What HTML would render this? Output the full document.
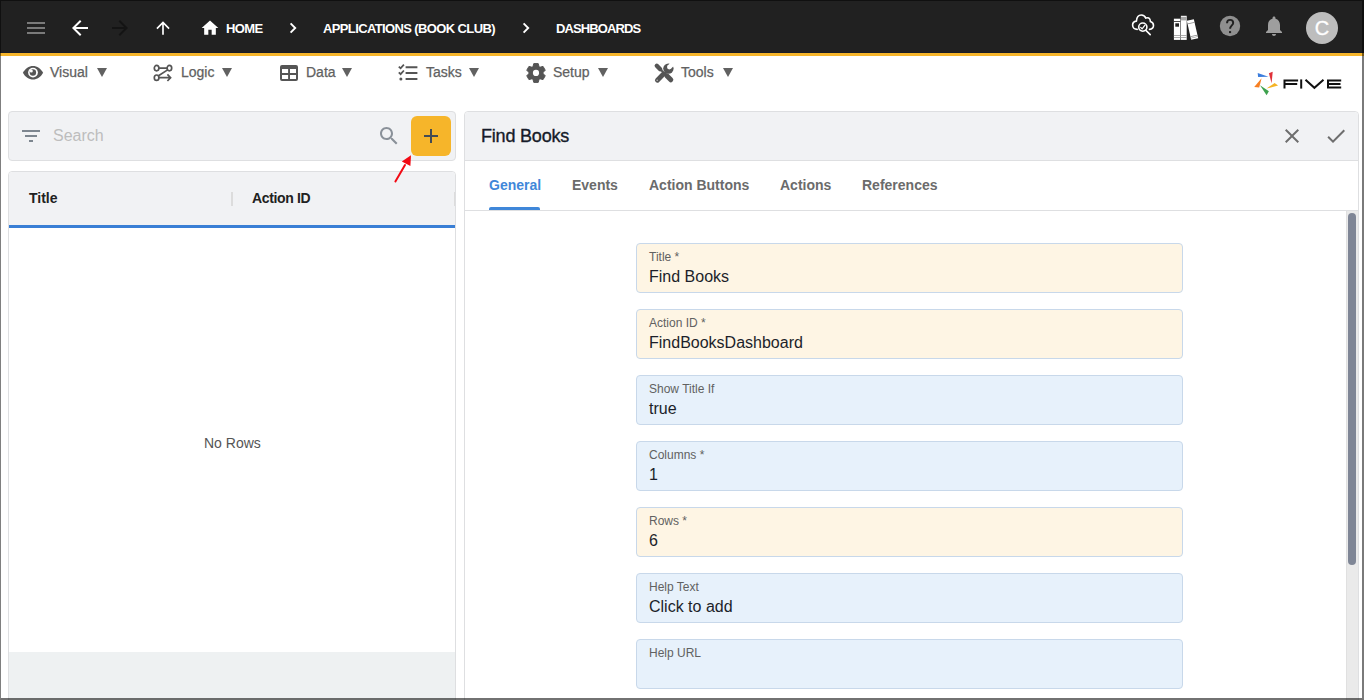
<!DOCTYPE html>
<html><head><meta charset="utf-8">
<style>
*{box-sizing:border-box;margin:0;padding:0}
html,body{width:1364px;height:700px;overflow:hidden;background:#fff;font-family:"Liberation Sans",sans-serif}
.a{position:absolute}
.t{position:absolute;white-space:nowrap;line-height:1}
#hdr{left:0;top:0;width:1364px;height:53px;background:#212121}
#hdrline{left:0;top:52px;width:1364px;height:1px;background:#1a1d27}
#yel{left:0;top:53px;width:1364px;height:3px;background:#f6b52a}
.crumb{color:#fff;font-weight:bold;font-size:13px}
.tb{color:#616161;font-size:14px;-webkit-text-stroke:0.25px #616161}

.card{background:#f1f2f4;border:1px solid #dedfe1;border-radius:4px}
.fld{position:absolute;left:636px;width:547px;height:50px;border:1px solid #c8d8ea;border-radius:4px}
.cream{background:#fef5e4}
.blue{background:#e7f1fb}
.lbl{position:absolute;left:12px;font-size:12px;color:#616161;white-space:nowrap;line-height:1}
.val{position:absolute;left:12px;font-size:16px;color:#1c1f2a;white-space:nowrap;line-height:1}
.tab{position:absolute;top:178px;font-size:14px;font-weight:bold;color:#6b6b6b;white-space:nowrap;line-height:1}
#border{left:0;top:0;width:1364px;height:700px;border-left:1px solid rgba(0,0,0,.5);border-top:1px solid rgba(0,0,0,.5);border-right:2px solid rgba(0,0,0,.52);border-bottom:2px solid rgba(0,0,0,.55);pointer-events:none}
</style></head><body>
<!-- header -->
<div id="hdr" class="a"></div>
<div id="hdrline" class="a"></div>
<div id="yel" class="a"></div>

<!-- hamburger -->
<div class="a" style="left:27px;top:22px;width:18px;height:2px;background:#7a7a7a"></div>
<div class="a" style="left:27px;top:27px;width:18px;height:2px;background:#7a7a7a"></div>
<div class="a" style="left:27px;top:32px;width:18px;height:2px;background:#7a7a7a"></div>
<!-- back arrow -->
<svg class="a" style="left:68px;top:16px" width="24" height="24" viewBox="0 0 24 24"><path fill="#fff" d="M20 11H7.83l5.59-5.59L12 4l-8 8 8 8 1.41-1.41L7.83 13H20v-2z"/></svg>
<!-- fwd arrow -->
<svg class="a" style="left:108px;top:16px" width="24" height="24" viewBox="0 0 24 24"><path fill="#141414" d="M12 4l-1.41 1.41L16.17 11H4v2h12.17l-5.58 5.59L12 20l8-8z"/></svg>
<!-- up arrow -->
<svg class="a" style="left:153px;top:18px" width="20" height="20" viewBox="0 0 24 24"><path fill="#fff" d="M4 12l1.41 1.41L11 7.83V20h2V7.83l5.58 5.59L20 12l-8-8-8 8z"/></svg>
<!-- home -->
<svg class="a" style="left:200px;top:18px" width="20" height="20" viewBox="0 0 24 24"><path fill="#fff" d="M10 20v-6h4v6h5v-8h3L12 3 2 12h3v8z"/></svg>
<div class="t crumb" style="left:226px;top:22px;letter-spacing:-0.6px">HOME</div>
<svg class="a" style="left:282.5px;top:20px" width="20" height="16" viewBox="0 0 20 16"><path fill="none" stroke="#fff" stroke-width="1.9" d="M7.6 3.4L12.2 8 7.6 12.6"/></svg>
<div class="t crumb" style="left:323px;top:22px;letter-spacing:-0.62px">APPLICATIONS (BOOK CLUB)</div>
<svg class="a" style="left:516px;top:20px" width="20" height="16" viewBox="0 0 20 16"><path fill="none" stroke="#fff" stroke-width="1.9" d="M7.6 3.4L12.2 8 7.6 12.6"/></svg>
<div class="t crumb" style="left:556px;top:22px;letter-spacing:-0.9px">DASHBOARDS</div>

<!-- right header icons -->
<svg class="a" style="left:1128px;top:10px" width="32" height="30" viewBox="1128 10 32 30"><g fill="none" stroke="#fff" stroke-width="1.6" stroke-linecap="round" stroke-linejoin="round">
<path d="M1137.2 29.4C1134.5 29.4 1132.6 27.5 1132.6 25.1 1132.6 22.9 1134.2 21.3 1136.4 21.1 1136.7 17.5 1138.5 15 1141.3 15 1143.5 15 1145.1 16.3 1145.8 18.1 1146.3 17.8 1146.9 17.7 1147.5 17.7 1149.3 17.7 1150.3 19.2 1150.4 21.6 1152.3 22.2 1153.5 23.7 1153.5 25.6 1153.5 27.6 1152 29.2 1149.5 29.4"/>
<circle cx="1142.8" cy="27.1" r="4.1"/>
<path d="M1145.9 30.4L1150.2 34.6"/>
<path stroke-width="1.3" d="M1140.7 27.4L1142.1 28.9 1145 25.1"/>
</g></svg>
<svg class="a" style="left:1170px;top:10px" width="32" height="34" viewBox="1170 10 32 34">
<rect x="1173.9" y="18.7" width="6.5" height="21.2" fill="#fff"/>
<rect x="1173.9" y="21" width="6.5" height="0.8" fill="#212121"/>
<rect x="1175.3" y="23.3" width="3.7" height="3.4" fill="#212121"/>
<rect x="1173.9" y="35.2" width="6.5" height="0.8" fill="#9a9a9a"/>
<rect x="1173.9" y="37" width="6.5" height="0.8" fill="#9a9a9a"/>
<rect x="1180.9" y="15.8" width="5.8" height="24.1" fill="#fff"/>
<rect x="1180.9" y="16.8" width="5.8" height="3.6" fill="#a8a8a8"/>
<rect x="1180.9" y="35.2" width="5.8" height="0.8" fill="#9a9a9a"/>
<rect x="1180.9" y="37" width="5.8" height="0.8" fill="#9a9a9a"/>
<g transform="rotate(-13 1192.5 29.5)"><rect x="1188.9" y="19.8" width="7.2" height="19.4" fill="#fff"/><rect x="1188.9" y="22.6" width="7.2" height="0.8" fill="#8a8a8a"/><rect x="1188.9" y="35.6" width="7.2" height="0.8" fill="#8a8a8a"/><rect x="1188.9" y="37.3" width="7.2" height="0.6" fill="#8a8a8a"/></g>
</svg>
<svg class="a" style="left:1218px;top:14px" width="24" height="24" viewBox="0 0 24 24"><circle cx="12" cy="12" r="10.2" fill="#8f8f8f"/><path fill="none" stroke="#212121" stroke-width="1.9" d="M9 9.3C9 7.2 10.4 5.9 12.1 5.9S15.2 7.1 15.2 9C15.2 11.3 12.1 11.7 12.1 14.8"/><rect x="11" y="17.1" width="2.1" height="2" fill="#212121"/></svg>
<svg class="a" style="left:1262px;top:13.5px" width="24" height="24" viewBox="0 0 24 24"><path fill="#9e9e9e" d="M12 22c1.1 0 2-.9 2-2h-4c0 1.1.89 2 2 2zm6-6v-5c0-3.07-1.64-5.64-4.5-6.32V4c0-.83-.67-1.5-1.5-1.5s-1.5.67-1.5 1.5v.68C7.63 5.36 6 7.92 6 11v5l-2 2v1h16v-1l-2-2z"/></svg>
<div class="a" style="left:1306px;top:12px;width:32px;height:32px;border-radius:50%;background:#bdbdbd"></div>
<div class="t" style="left:1306px;top:18px;width:32px;text-align:center;color:#fff;font-size:20px;-webkit-text-stroke:0.3px #fff">C</div>

<!-- toolbar -->
<svg class="a" style="left:18px;top:58px" width="30" height="30" viewBox="18 58 30 30"><path fill="#555" d="M22.9 72.8C25.3 68.4 28.9 65.9 33 65.9S40.7 68.4 43.1 72.8C40.7 77.2 37.1 79.6 33 79.6S25.3 77.2 22.9 72.8z"/><circle cx="33" cy="72.6" r="4.9" fill="#fff"/><circle cx="32.9" cy="72.5" r="3.2" fill="#555"/><circle cx="31.3" cy="70.9" r="1.5" fill="#fff"/></svg>
<div class="t tb" style="left:50px;top:65px">Visual</div>
<svg class="a tri" style="left:97px;top:68px" width="10" height="9" viewBox="0 0 10 9"><path fill="#616161" d="M0 0h10L5 9z"/></svg>
<svg class="a" style="left:152px;top:63px" width="22" height="20" viewBox="0 0 22 20"><g fill="none" stroke="#555" stroke-width="1.7"><ellipse cx="4.6" cy="5.1" rx="2.3" ry="2.7"/><ellipse cx="17.4" cy="5.1" rx="2.3" ry="2.7"/><ellipse cx="4.6" cy="14.7" rx="2.3" ry="2.7"/><path d="M6.9 5.1h8.2M15.6 6.9L6.5 12.8M6.9 14.7H18.6M15.4 11.4l3.2 3.3-3.2 3.3"/></g></svg>
<div class="t tb" style="left:181px;top:65px">Logic</div>
<svg class="a tri" style="left:222px;top:68px" width="10" height="9" viewBox="0 0 10 9"><path fill="#616161" d="M0 0h10L5 9z"/></svg>
<svg class="a" style="left:280px;top:65px" width="18" height="16" viewBox="0 0 18 16"><path fill="#555" fill-rule="evenodd" d="M2 0h14a2 2 0 0 1 2 2v12a2 2 0 0 1-2 2H2a2 2 0 0 1-2-2V2a2 2 0 0 1 2-2zM2 4.1v4h6.1v-4zM10 4.1v4h6v-4zM2 9.9v4.1h6.1V9.9zM10 9.9v4.1h6V9.9z"/></svg>
<div class="t tb" style="left:306px;top:65px">Data</div>
<svg class="a tri" style="left:342px;top:68px" width="10" height="9" viewBox="0 0 10 9"><path fill="#616161" d="M0 0h10L5 9z"/></svg>
<svg class="a" style="left:397px;top:63px" width="22" height="20" viewBox="0 0 22 20"><g fill="none" stroke="#555" stroke-width="1.8"><path d="M1.8 3.6l1.8 1.7 3.3-3.6M1.8 9.4l1.8 1.7 3.3-3.6"/><path stroke-width="2" d="M8.6 4.3h11.8M8.6 10.1h11.8M8.6 16h11.8"/></g><circle cx="3.9" cy="16" r="1.5" fill="#555"/></svg>
<div class="t tb" style="left:426px;top:65px">Tasks</div>
<svg class="a tri" style="left:469px;top:68px" width="10" height="9" viewBox="0 0 10 9"><path fill="#616161" d="M0 0h10L5 9z"/></svg>
<svg class="a" style="left:526px;top:63px" width="20" height="20" viewBox="0 0 20 20"><path fill="#555" stroke="#555" stroke-width="1" stroke-linejoin="round" d="M7.00 3.50L7.80 0.60L12.20 0.60L13.00 3.50ZM14.13 4.15L17.04 3.39L19.24 7.21L17.13 9.35ZM17.13 10.65L19.24 12.79L17.04 16.61L14.13 15.85ZM13.00 16.50L12.20 19.40L7.80 19.40L7.00 16.50ZM5.87 15.85L2.96 16.61L0.76 12.79L2.87 10.65ZM2.87 9.35L0.76 7.21L2.96 3.39L5.87 4.15Z"/><circle cx="10" cy="10" r="7.5" fill="#555"/><circle cx="10" cy="9.9" r="3.1" fill="#fff"/></svg>
<div class="t tb" style="left:553px;top:65px">Setup</div>
<svg class="a tri" style="left:598px;top:68px" width="10" height="9" viewBox="0 0 10 9"><path fill="#616161" d="M0 0h10L5 9z"/></svg>
<svg class="a" style="left:646px;top:58px" width="32" height="30" viewBox="646 58 32 30"><defs><mask id="wm"><rect x="646" y="58" width="32" height="30" fill="#fff"/><circle cx="669.3" cy="67.1" r="2.3" fill="#000"/><path d="M667.7 65.5L671 62.2 674.2 65.4 670.9 68.7z" fill="#000"/></mask></defs><g fill="none" stroke="#555" stroke-linecap="round"><path stroke-width="4.4" d="M656.8 65.8L660.2 69.2"/><path stroke-width="2" d="M660 69L665 74"/><path stroke-width="5" d="M666.8 75.8L670.8 79.8"/><path stroke-width="4.8" d="M663.2 74.3L657.4 80.2"/></g><circle cx="668.4" cy="68.6" r="5.2" fill="#555" mask="url(#wm)"/><path d="M664.5 72.5l1.5 1.5" stroke="#555" stroke-width="3"/><circle cx="657.2" cy="80.3" r="0.8" fill="#bbb"/></svg>
<div class="t tb" style="left:681px;top:65px">Tools</div>
<svg class="a tri" style="left:723px;top:68px" width="10" height="9" viewBox="0 0 10 9"><path fill="#616161" d="M0 0h10L5 9z"/></svg>

<!-- FIVE logo -->
<svg class="a" style="left:1250px;top:68px" width="96" height="32" viewBox="1250 68 96 32">
<path fill="#3b7ddd" d="M1257.7 72.9L1258.1 77.1 1268.5 76.7z"/>
<path fill="#e0323a" d="M1268.9 73.2L1272.7 71.7 1271.6 83.2z"/>
<path fill="#f5b325" d="M1266.6 88.6L1274.6 82.9 1278.1 85.6z"/>
<path fill="#3ea24e" d="M1260 85.2L1268.9 91.3 1266.6 95.2z"/>
<path fill="#f77f22" d="M1261.6 78.2L1254.2 87.1 1259.2 87.5z"/>
<g fill="none" stroke="#111" stroke-width="2">
<path d="M1284.5 79.4V88.6M1283.5 80.4H1298.1M1284.5 84H1297.2"/>
<path d="M1301.2 79.4V88.6"/>
<path d="M1305.5 79.8L1314.4 87.8 1323.5 79.8"/>
<path d="M1341.2 80.4H1328M1328 79.4V88.6M1328 84H1340.5M1328 87.6H1341.2"/>
</g>
</svg>

<!-- left search card -->
<div class="a card" style="left:8px;top:111px;width:448px;height:50px"></div>
<div class="t" style="left:53px;top:128px;font-size:16px;color:#bdbdbd">Search</div>
<div class="a" style="left:411px;top:116px;width:40px;height:40px;border-radius:6px;background:#f6b52a"></div>

<!-- left table card -->
<div class="a card" style="left:8px;top:171px;width:448px;height:540px;background:#fff"></div>
<div class="a" style="left:9px;top:172px;width:446px;height:53px;background:#f1f2f4;border-radius:4px 4px 0 0"></div>
<div class="a" style="left:9px;top:225px;width:446px;height:3px;background:#3a7fd5"></div>
<div class="t" style="left:29px;top:191px;font-size:14px;font-weight:bold;color:#212121">Title</div>
<div class="a" style="left:231px;top:192px;width:2px;height:14px;background:#dcdcdc"></div>
<div class="t" style="left:252px;top:191px;font-size:14px;font-weight:bold;color:#212121;letter-spacing:-0.35px">Action ID</div>
<div class="a" style="left:454px;top:192px;width:1px;height:14px;background:#dcdcdc"></div>
<div class="t" style="left:204px;top:436px;font-size:14px;color:#555">No Rows</div>
<div class="a" style="left:9px;top:652px;width:446px;height:48px;background:#eef1f2"></div>

<!-- right panel -->
<div class="a" style="left:464px;top:111px;width:895px;height:600px;border:1px solid #dedfe1;border-radius:4px;background:#fff"></div>
<div class="a" style="left:465px;top:112px;width:893px;height:48px;background:#f1f2f4;border-radius:4px 4px 0 0"></div>
<div class="a" style="left:465px;top:160px;width:893px;height:1px;background:#dedfe1"></div>
<div class="t" style="left:481px;top:127px;font-size:18px;color:#161b29;-webkit-text-stroke:0.35px #161b29;letter-spacing:-0.2px">Find Books</div>
<div class="a" style="left:465px;top:210px;width:893px;height:1px;background:#dedfe1"></div>
<div class="tab" style="left:489px;color:#3f87d9">General</div>
<div class="a" style="left:489px;top:207px;width:51px;height:3px;background:#3f87d9;border-radius:2px 2px 0 0"></div>
<div class="tab" style="left:572px">Events</div>
<div class="tab" style="left:649px">Action Buttons</div>
<div class="tab" style="left:780px">Actions</div>
<div class="tab" style="left:862px">References</div>

<!-- search icons -->
<svg class="a" style="left:19px;top:124px" width="24" height="24" viewBox="0 0 24 24"><path fill="#7d868f" d="M10 18h4v-2h-4v2zM3 6v2h18V6H3zm3 7h12v-2H6v2z"/></svg>
<svg class="a" style="left:377px;top:124px" width="24" height="24" viewBox="0 0 24 24"><path fill="#8a9199" d="M15.5 14h-.79l-.28-.27C15.41 12.59 16 11.11 16 9.5 16 5.91 13.09 3 9.5 3S3 5.91 3 9.5 5.91 16 9.5 16c1.61 0 3.09-.59 4.23-1.57l.27.28v.79l5 4.99L20.49 19l-4.99-5zm-6 0C7.01 14 5 11.99 5 9.5S7.01 5 9.5 5 14 7.01 14 9.5 11.99 14 9.5 14z"/></svg>
<div class="a" style="left:424px;top:135px;width:14px;height:2px;background:#434b55"></div>
<div class="a" style="left:430px;top:129px;width:2px;height:14px;background:#434b55"></div>
<!-- red arrow -->
<svg class="a" style="left:390px;top:150px" width="26" height="36" viewBox="390 150 26 36"><path d="M395.4 181.4L405 165" stroke="#f20a14" stroke-width="2" fill="none" stroke-linecap="round"/><path fill="#f20a14" d="M411 155.3L401.8 161.4 410.4 165.9z"/></svg>
<!-- close / check -->
<svg class="a" style="left:1280px;top:124px" width="24" height="24" viewBox="0 0 24 24"><path fill="#6e6e6e" d="M19 6.41L17.59 5 12 10.59 6.41 5 5 6.41 10.59 12 5 17.59 6.41 19 12 13.41 17.59 19 19 17.59 13.41 12z"/></svg>
<svg class="a" style="left:1324px;top:124px" width="24" height="24" viewBox="0 0 24 24"><path fill="#6e6e6e" d="M9 16.17L4.83 12l-1.42 1.41L9 19 21 7l-1.41-1.41z"/></svg>
<!-- scrollbar -->
<div class="a" style="left:1346px;top:211px;width:12px;height:489px;background:#eaeaea;border-left:1px solid #e0e0e0"></div>
<div class="a" style="left:1348px;top:213px;width:8px;height:352px;border-radius:4px;background:#7f8696"></div>

<!-- fields -->
<div class="fld cream" style="top:243px"><div class="lbl" style="top:7px">Title *</div><div class="val" style="top:25px">Find Books</div></div>
<div class="fld cream" style="top:309px"><div class="lbl" style="top:7px">Action ID *</div><div class="val" style="top:25px">FindBooksDashboard</div></div>
<div class="fld blue" style="top:375px"><div class="lbl" style="top:7px">Show Title If</div><div class="val" style="top:25px">true</div></div>
<div class="fld blue" style="top:441px"><div class="lbl" style="top:7px">Columns *</div><div class="val" style="top:25px">1</div></div>
<div class="fld cream" style="top:507px"><div class="lbl" style="top:7px">Rows *</div><div class="val" style="top:25px">6</div></div>
<div class="fld blue" style="top:573px"><div class="lbl" style="top:7px">Help Text</div><div class="val" style="top:25px">Click to add</div></div>
<div class="fld blue" style="top:639px"><div class="lbl" style="top:7px">Help URL</div></div>

<div id="border" class="a"></div>
</body></html>
